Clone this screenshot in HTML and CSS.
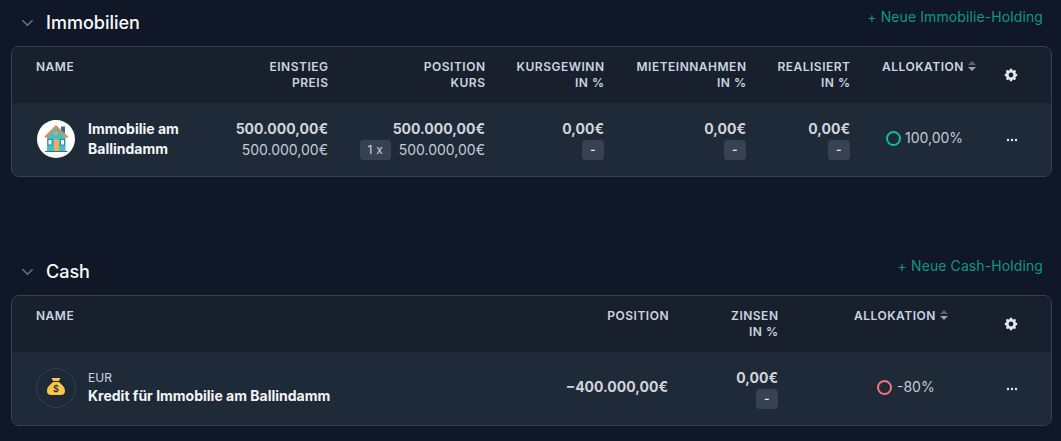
FILE: index.html
```html
<!DOCTYPE html>
<html lang="de">
<head>
<meta charset="utf-8">
<title>Holdings</title>
<link rel="stylesheet" href="styles.css">
</head>
<body>
<section class="section">
  <header class="section-head">
    <div class="title-wrap">
      <svg class="chevron" viewBox="0 0 14 8"><path d="M1.500 1l5.500 5.500L12.500 1"/></svg>
      <h2 class="title">Immobilien</h2>
    </div>
    <a class="add-link">+ Neue Immobilie-Holding</a>
  </header>
  <div class="card">
    <div class="grid grid-estate head">
      <div class="th">Name</div>
      <div class="th right">Einstieg<br>Preis</div>
      <div class="th right">Position<br>Kurs</div>
      <div class="th right">Kursgewinn<br>in %</div>
      <div class="th right">Mieteinnahmen<br>in %</div>
      <div class="th right">Realisiert<br>in %</div>
      <div class="th alloc-head alloc-head-estate">Allokation
        <svg class="sort" viewBox="0 0 8 10"><path class="sort-up" d="M4 0l4 4H0z"/><path class="sort-down" d="M4 10L0 6h8z"/></svg>
      </div>
      <div class="gear-cell"><svg class="gear" viewBox="0 0 20 20"><path fill-rule="evenodd" clip-rule="evenodd" d="M11.490 3.170c-.38-1.560-2.600-1.560-2.980 0a1.532 1.532 0 01-2.286.948c-1.372-.836-2.942.734-2.106 2.106.54.886.061 2.042-.947 2.287-1.561.379-1.561 2.600 0 2.978a1.532 1.532 0 01.947 2.287c-.836 1.372.734 2.942 2.106 2.106a1.532 1.532 0 012.287.947c.379 1.561 2.600 1.561 2.978 0a1.533 1.533 0 012.287-.947c1.372.836 2.942-.734 2.106-2.106a1.533 1.533 0 01.947-2.287c1.561-.379 1.561-2.600 0-2.978a1.532 1.532 0 01-.947-2.287c.836-1.372-.734-2.942-2.106-2.106a1.532 1.532 0 01-2.287-.947zM10 13a3 3 0 100-6 3 3 0 000 6z"/></svg></div>
    </div>
    <div class="grid grid-estate row">
      <div class="name-cell name-cell-estate">
        <svg class="avatar" viewBox="0 0 38 38">
          <circle cx="19" cy="19" r="19" fill="#fff"/>
          <rect x="24" y="6.500" width="4" height="7" fill="#2c6f86"/>
          <rect x="10" y="17" width="18.500" height="14" fill="#45bfc2"/>
          <path d="M19 7.500L9.500 17h19z" fill="#45bfc2"/>
          <path d="M8 17.500L19 6.500 30.500 17.500" fill="none" stroke="#e8835c" stroke-width="2.200"/>
          <circle cx="19" cy="13.500" r="1.800" fill="#f2a25f"/>
          <rect x="11" y="19.500" width="4" height="5.500" fill="#e8f4f6" stroke="#2c6f86" stroke-width=".8"/>
          <rect x="23.500" y="19.500" width="4" height="5.500" fill="#e8f4f6" stroke="#2c6f86" stroke-width=".8"/>
          <rect x="17" y="19.500" width="5" height="11.500" fill="#f4a95f"/>
          <rect x="8" y="31" width="22.500" height="1" fill="#2c6f86"/>
        </svg>
        <div class="name">Immobilie am<br>Ballindamm</div>
      </div>
      <div class="td right"><div class="strong">500.000,00€</div><div class="line">500.000,00€</div></div>
      <div class="td right"><div class="strong">500.000,00€</div><div class="line with-badge"><span class="badge">1 x</span><span>500.000,00€</span></div></div>
      <div class="td right"><div class="strong">0,00€</div><div class="line with-badge"><span class="badge dash">-</span></div></div>
      <div class="td right"><div class="strong">0,00€</div><div class="line with-badge"><span class="badge dash">-</span></div></div>
      <div class="td right"><div class="strong">0,00€</div><div class="line with-badge"><span class="badge dash">-</span></div></div>
      <div class="alloc alloc-estate"><span class="ring ring-teal"></span><span>100,00%</span></div>
      <div class="menu-cell"><svg class="dots" viewBox="0 0 12 4"><circle cx="2" cy="2" r="1.200"/><circle cx="6" cy="2" r="1.200"/><circle cx="10" cy="2" r="1.200"/></svg></div>
    </div>
  </div>
</section>
<section class="section">
  <header class="section-head">
    <div class="title-wrap">
      <svg class="chevron" viewBox="0 0 14 8"><path d="M1.500 1l5.500 5.500L12.500 1"/></svg>
      <h2 class="title">Cash</h2>
    </div>
    <a class="add-link">+ Neue Cash-Holding</a>
  </header>
  <div class="card">
    <div class="grid grid-cash head">
      <div class="th">Name</div>
      <div class="th right th-position">Position</div>
      <div class="th right">Zinsen<br>in %</div>
      <div class="th alloc-head alloc-head-cash">Allokation
        <svg class="sort" viewBox="0 0 8 10"><path class="sort-up" d="M4 0l4 4H0z"/><path class="sort-down" d="M4 10L0 6h8z"/></svg>
      </div>
      <div class="gear-cell"><svg class="gear" viewBox="0 0 20 20"><path fill-rule="evenodd" clip-rule="evenodd" d="M11.490 3.170c-.38-1.560-2.600-1.560-2.980 0a1.532 1.532 0 01-2.286.948c-1.372-.836-2.942.734-2.106 2.106.54.886.061 2.042-.947 2.287-1.561.379-1.561 2.600 0 2.978a1.532 1.532 0 01.947 2.287c-.836 1.372.734 2.942 2.106 2.106a1.532 1.532 0 012.287.947c.379 1.561 2.600 1.561 2.978 0a1.533 1.533 0 012.287-.947c1.372.836 2.942-.734 2.106-2.106a1.533 1.533 0 01.947-2.287c1.561-.379 1.561-2.600 0-2.978a1.532 1.532 0 01-.947-2.287c.836-1.372-.734-2.942-2.106-2.106a1.532 1.532 0 01-2.287-.947zM10 13a3 3 0 100-6 3 3 0 000 6z"/></svg></div>
    </div>
    <div class="grid grid-cash row">
      <div class="name-cell">
        <svg class="avatar avatar-cash" viewBox="0 0 40 40">
          <circle cx="20" cy="20" r="19.500" fill="none" stroke="#374151"/>
          <path d="M15.500 10h9l-1.600 3h-5.800z" fill="#fbc54a"/>
          <path d="M17 14h6c1.500 2 6 4 6 9 0 3-2 4-4.500 4h-9c-2.500 0-4.500-1-4.500-4 0-5 4.500-7 6-9z" fill="#fbc54a"/>
          <text class="dollar" x="20" y="23.500" text-anchor="middle">$</text>
        </svg>
        <div class="name-stack">
          <div class="ticker">EUR</div>
          <div class="name">Kredit für Immobilie am Ballindamm</div>
        </div>
      </div>
      <div class="td right td-single"><div class="strong">−400.000,00€</div></div>
      <div class="td right"><div class="strong">0,00€</div><div class="line with-badge"><span class="badge dash">-</span></div></div>
      <div class="alloc alloc-cash"><span class="ring ring-red"></span><span>-80%</span></div>
      <div class="menu-cell"><svg class="dots" viewBox="0 0 12 4"><circle cx="2" cy="2" r="1.200"/><circle cx="6" cy="2" r="1.200"/><circle cx="10" cy="2" r="1.200"/></svg></div>
    </div>
  </div>
</section>
</body>
</html>
```
FILE: styles.css
```css
* { box-sizing: border-box; }
html, body { margin: 0; padding: 0; overflow: hidden; }
body {
  background: #101726;
  font-family: "Inter", "Liberation Sans", sans-serif;
  color: #cbd5e1;
  font-size: 14px;
  line-height: 20px;
}
.section { padding: 0 9px 72px 11px; }
.section + .section { padding-bottom: 0; }
.section-head {
  height: 46px;
  display: flex;
  justify-content: space-between;
  align-items: flex-start;
}
.title-wrap { display: flex; align-items: center; height: 46px; padding: 0 0 0 10px; }
.chevron { width: 13px; height: 8px; fill: none; stroke: #6b7280; stroke-width: 1.600; }
.title { margin: 0 0 0 12px; font-size: 18px; line-height: 28px; font-weight: 500; color: #f9fafb; }
.add-link { margin: 7px 9px 0 0; color: #0f9686; font-size: 14px; line-height: 20px; letter-spacing: 0.1px; }
.card {
  border: 1px solid #374151;
  border-radius: 8px;
  overflow: hidden;
  background: #1e2a38;
}
.grid { display: grid; }
.grid-estate { grid-template-columns: 180px 112px 157px 119px 142px 104px 138px 1fr; }
.grid-cash { grid-template-columns: 400px 233px 109px 210px 1fr; }
.head { height: 56px; background: #19202d; padding-left: 24px; }
.row { height: 73px; padding-left: 24px; align-items: center; background: #1e2a38; }
.th {
  padding-top: 12px;
  font-size: 12px;
  line-height: 16px;
  font-weight: 600;
  letter-spacing: 0.5px;
  text-transform: uppercase;
  color: #cbd5e1;
}
.right { text-align: right; }
.th.right { margin-right: -0.5px; }
.th.th-position { margin-right: 0; }
.alloc-head { white-space: nowrap; }
.alloc-head-estate { padding-left: 32px; }
.alloc-head-cash { padding-left: 76px; }
.sort { width: 8px; height: 10px; margin-left: 1px; }
.sort-up { fill: #5b6472; }
.sort-down { fill: #9ca3af; }
.gear-cell { display: flex; justify-content: center; padding: 20px 18px 0 0; }
.gear { width: 16px; height: 16px; fill: #e5e7eb; }
.name-cell { display: flex; align-items: center; gap: 13px; padding-bottom: 1px; }
.name-cell-estate { padding-left: 1px; }
.avatar { width: 38px; height: 38px; flex: none; }
.avatar-cash { width: 40px; height: 40px; margin-right: -1px; }
.dollar { font-size: 9px; font-weight: 600; fill: #1e2a38; font-family: "Inter", sans-serif; }
.name { font-weight: 700; color: #f3f4f6; white-space: nowrap; margin-bottom: 1px; }
.ticker { font-size: 12px; line-height: 16px; color: #cbd5e1; }
.strong { font-weight: 700; color: #d1d5db; margin-bottom: 1px; }
.td-single { padding-bottom: 2px; margin-right: 1px; }
.line { color: #c3cbd6; }
.with-badge { display: flex; justify-content: flex-end; align-items: center; gap: 8px; }
.badge {
  height: 20px;
  padding: 0 7.5px;
  border-radius: 4px;
  background: #374151;
  font-size: 12px;
  line-height: 20px;
  letter-spacing: 0.3px;
  color: #d1d5db;
}
.dash { width: 22px; padding: 0; text-align: center; color: #e5e7eb; font-weight: 600; }
.alloc { display: flex; align-items: center; gap: 4px; padding-bottom: 3px; color: #c3cbd6; }
.alloc-estate { padding-left: 36px; }
.alloc-cash { padding-left: 99px; gap: 5px; }
.ring { width: 15px; height: 15px; border-radius: 50%; border: 2.5px solid; }
.ring-teal { border-color: #14b8a6; }
.ring-red { border-color: #f87180; }
.menu-cell { display: flex; justify-content: center; padding-right: 16px; }
.dots { width: 12px; height: 4px; fill: #e5e7eb; }
```
